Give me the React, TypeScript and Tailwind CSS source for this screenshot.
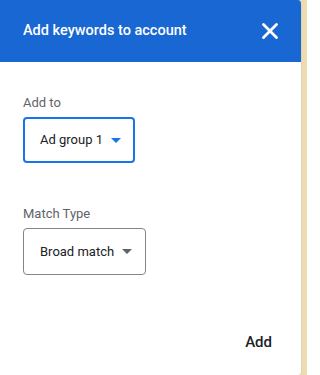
import { X } from "lucide-react";

function Caret({ color }: { color: string }) {
  return (
    <svg width="10" height="5" viewBox="0 0 10 5" className="ml-[8px]">
      <path d="M0 0 L10 0 L5 5 Z" fill={color} />
    </svg>
  );
}

export default function App() {
  return (
    <div className="flex h-[375px] w-[307px] bg-[#eddcae]" style={{ fontFamily: "Roboto, 'Liberation Sans', sans-serif" }}>
      <div className="flex w-[302px] flex-col rounded-tr-[4px] rounded-br-[4px] bg-white border-r border-[#d9d2bd] overflow-hidden">
        <div className="flex h-[62px] items-center justify-between bg-[#1967d2] pl-[23px] pr-[18px]">
          <span className="text-[14.5px] font-medium text-white">Add keywords to account</span>
          <X size={26} strokeWidth={2.6} className="text-white" />
        </div>
        <div className="flex flex-1 flex-col px-[23px] pt-[32px]">
          <div className="text-[13px] text-[#5f6368] leading-[18px]">Add to</div>
          <button className="mt-[5px] flex h-[46px] w-[112px] items-center rounded-[4px] border-2 border-[#1a73e8] pl-[15px] text-[13px] text-[#202124]">
            Ad group 1
            <Caret color="#1a73e8" />
          </button>
          <div className="mt-[42px] text-[13px] text-[#5f6368] leading-[18px]">Match Type</div>
          <button className="mt-[5px] flex h-[47px] w-[123px] items-center rounded-[4px] border border-[#80868b] pl-[16px] text-[13px] text-[#202124]">
            Broad match
            <Caret color="#5f6368" />
          </button>
          <div className="mt-[56px] flex justify-end pr-[6px]">
            <button className="text-[15px] font-medium text-[#202124]">Add</button>
          </div>
        </div>
      </div>
      <div className="flex-1" />
    </div>
  );
}
